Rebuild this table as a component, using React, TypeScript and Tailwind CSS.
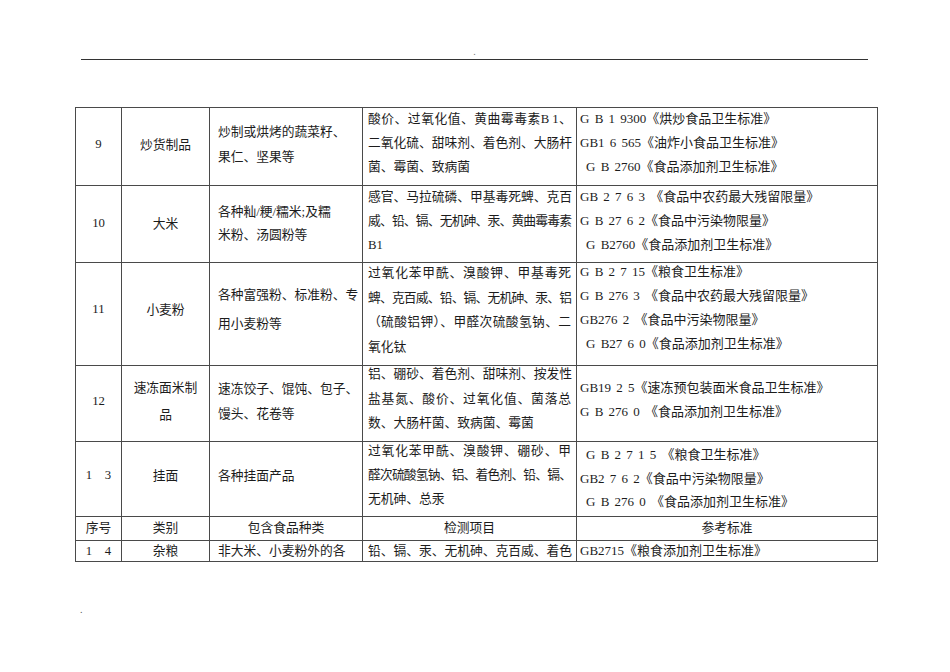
import React from 'react';

type Std = { t: string; indent?: boolean };

interface RowData {
  no: string;
  cat: string[];
  catLead: string;
  foods: string[];
  foodsLead: string;
  mid: string;
  items: string[];
  itemsCls: string;
  stds: Std[];
  stdsCls: string;
  h: string;
}

const rows: RowData[] = [
  {
    no: '9',
    cat: ['炒货制品'],
    catLead: 'leading-[24px]',
    foods: ['炒制或烘烤的蔬菜籽、', '果仁、坚果等'],
    foodsLead: 'leading-[25px]',
    mid: 'pb-[4px]',
    items: ['酸价、过氧化值、黄曲霉毒素B 1、', '二氧化硫、甜味剂、着色剂、大肠杆', '菌、霉菌、致病菌'],
    itemsCls: 'leading-[24px] -mt-[1px]',
    stds: [
      { t: 'G B 1 9300《烘炒食品卫生标准》' },
      { t: 'GB1 6 565《油炸小食品卫生标准》' },
      { t: 'G B 2760《食品添加剂卫生标准》', indent: true },
    ],
    stdsCls: 'leading-[24px] -mt-[1px]',
    h: 'h-[78px]',
  },
  {
    no: '10',
    cat: ['大米'],
    catLead: 'leading-[24px]',
    foods: ['各种籼/粳/糯米;及糯', '米粉、汤圆粉等'],
    foodsLead: 'leading-[23.5px]',
    mid: 'pb-[0px]',
    items: ['感官、马拉硫磷、甲基毒死蜱、克百', '威、铅、镉、无机砷、汞、黄曲霉毒素', 'B1'],
    itemsCls: 'leading-[24px] -mt-[1px]',
    stds: [
      { t: 'GB 2 7 6 3 《食品中农药最大残留限量》' },
      { t: 'G B 27 6 2《食品中污染物限量》' },
      { t: 'G B2760《食品添加剂卫生标准》', indent: true },
    ],
    stdsCls: 'leading-[24px] -mt-[1px]',
    h: 'h-[77px]',
  },
  {
    no: '11',
    cat: ['小麦粉'],
    catLead: 'leading-[24px]',
    foods: ['各种富强粉、标准粉、专', '用小麦粉等'],
    foodsLead: 'leading-[29px]',
    mid: 'pb-[8px]',
    items: ['过氧化苯甲酰、溴酸钾、甲基毒死', '蜱、克百威、铅、镉、无机砷、汞、铝', '（硫酸铝钾）、甲醛次硫酸氢钠、二', '氧化钛'],
    itemsCls: 'leading-[24.7px] -mt-[2px]',
    stds: [
      { t: 'G B 2 7 15《粮食卫生标准》' },
      { t: 'G B 276 3 《食品中农药最大残留限量》' },
      { t: 'GB276 2 《食品中污染物限量》' },
      { t: 'G B27 6 0《食品添加剂卫生标准》', indent: true },
    ],
    stdsCls: 'leading-[24px] -mt-[3px]',
    h: 'h-[103px]',
  },
  {
    no: '12',
    cat: ['速冻面米制', '品'],
    catLead: 'leading-[27px]',
    foods: ['速冻饺子、馄饨、包子、', '馒头、花卷等'],
    foodsLead: 'leading-[25px]',
    mid: 'pb-[3px]',
    items: ['铝、硼砂、着色剂、甜味剂、按发性', '盐基氮、酸价、过氧化值、菌落总', '数、大肠杆菌、致病菌、霉菌'],
    itemsCls: 'leading-[24.5px] -mt-[4px]',
    stds: [
      { t: 'GB19 2 5《速冻预包装面米食品卫生标准》' },
      { t: 'G B 276 0 《食品添加剂卫生标准》' },
    ],
    stdsCls: 'leading-[23.5px] pt-[10px]',
    h: 'h-[76px]',
  },
  {
    no: '1　3',
    cat: ['挂面'],
    catLead: 'leading-[24px]',
    foods: ['各种挂面产品'],
    foodsLead: 'leading-[24px]',
    mid: 'pb-[7px]',
    items: ['过氧化苯甲酰、溴酸钾、硼砂、甲', '醛次硫酸氢钠、铝、着色剂、铅、镉、', '无机砷、总汞'],
    itemsCls: 'leading-[24px] -mt-[3px]',
    stds: [
      { t: 'G B 2 7 1 5 《粮食卫生标准》', indent: true },
      { t: 'GB2 7 6 2《食品中污染物限量》' },
      { t: 'G B 276 0 《食品添加剂卫生标准》', indent: true },
    ],
    stdsCls: 'leading-[23.5px] mt-[1px]',
    h: 'h-[75px]',
  },
];

const border = 'border border-[#4a4a4a]';

const ItemLines = ({ lines }: { lines: string[] }) => (
  <>
    {lines.map((l, i) => {
      const last = i === lines.length - 1;
      const long = l.length >= 17;
      return (
        <div
          key={i}
          className={`whitespace-nowrap ${last ? 'text-left' : 'text-justify [text-align-last:justify]'} ${
            long ? 'tracking-[-0.8px]' : ''
          }`}
        >
          {l}
        </div>
      );
    })}
  </>
);

export default function App() {
  return (
    <div
      className="w-[950px] h-[672px] bg-white text-[#1c1c1c] overflow-hidden"
      style={{ fontFamily: '"Liberation Serif", "Noto Sans CJK SC", serif' }}
    >
      <div className="ml-[81px] w-[787px] pt-[45px] border-b border-[#333]">
        <div className="text-center text-[10px] leading-[14px] text-[#777]">.</div>
      </div>

      <table className="ml-[75px] mt-[47px] w-[802px] table-fixed border-collapse text-[12.75px]">
        <colgroup>
          <col className="w-[46px]" />
          <col className="w-[88px]" />
          <col className="w-[153px]" />
          <col className="w-[214px]" />
          <col className="w-[301px]" />
        </colgroup>
        <tbody>
          {rows.map((r) => (
            <tr key={r.no} className={r.h}>
              <td className={`${border} align-middle text-center ${r.mid}`}>{r.no}</td>
              <td className={`${border} align-middle text-center ${r.mid} ${r.catLead}`}>
                {r.cat.map((c) => (
                  <div key={c}>{c}</div>
                ))}
              </td>
              <td className={`${border} align-middle pl-[8px] pr-[4px] ${r.mid} ${r.foodsLead}`}>
                {r.foods.map((f) => (
                  <div key={f} className="whitespace-nowrap">
                    {f}
                  </div>
                ))}
              </td>
              <td className={`${border} align-top pl-[5px] pr-[5px]`}>
                <div className={r.itemsCls}>
                  <ItemLines lines={r.items} />
                </div>
              </td>
              <td className={`${border} align-top pl-[3px] text-[13px] [word-spacing:2px]`}>
                <div className={r.stdsCls}>
                  {r.stds.map((s) => (
                    <div key={s.t} className={`whitespace-nowrap ${s.indent ? 'pl-[6px]' : ''}`}>
                      {s.t}
                    </div>
                  ))}
                </div>
              </td>
            </tr>
          ))}
          <tr className="h-[24px]">
            <td className={`${border} align-middle text-center`}>序号</td>
            <td className={`${border} align-middle text-center`}>类别</td>
            <td className={`${border} align-middle text-center`}>包含食品种类</td>
            <td className={`${border} align-middle text-center`}>检测项目</td>
            <td className={`${border} align-middle text-center`}>参考标准</td>
          </tr>
          <tr className="h-[21px]">
            <td className={`${border} align-middle text-center leading-[20px]`}>1　4</td>
            <td className={`${border} align-middle text-center leading-[20px]`}>杂粮</td>
            <td className={`${border} align-middle pl-[8px] leading-[20px] whitespace-nowrap`}>非大米、小麦粉外的各</td>
            <td className={`${border} align-middle pl-[5px] pr-[5px] leading-[20px]`}>
              <div className="whitespace-nowrap">铅、镉、汞、无机砷、克百威、着色</div>
            </td>
            <td className={`${border} align-middle pl-[3px] leading-[20px] whitespace-nowrap text-[13px]`}>GB2715《粮食添加剂卫生标准》</td>
          </tr>
        </tbody>
      </table>

      <div className="ml-[80px] mt-[41px] text-[10px] leading-[14px] text-[#555]">.</div>
    </div>
  );
}
